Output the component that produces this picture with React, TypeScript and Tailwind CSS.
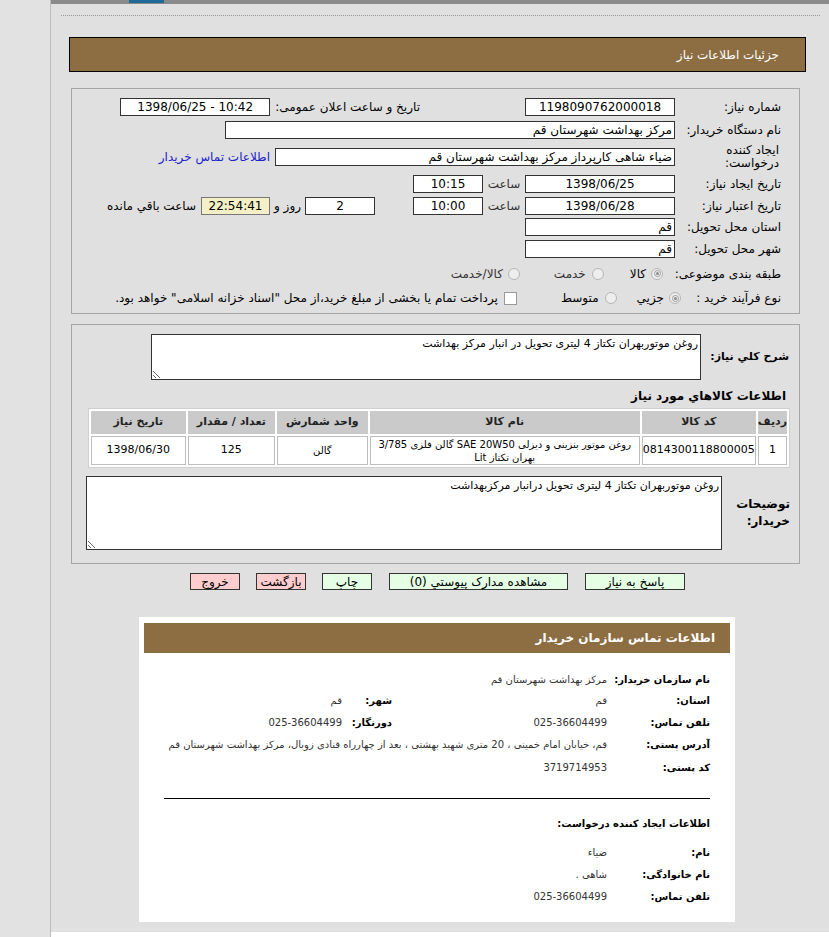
import React from "react";

function Field({
  className,
  children,
  align = "center",
}: {
  className: string;
  children?: React.ReactNode;
  align?: "center" | "right";
}) {
  return (
    <div
      className={`h-[18px] shrink-0 border border-[#333] bg-white flex items-center text-[12px] leading-none whitespace-nowrap ${
        align === "center" ? "justify-center" : "justify-start pr-[2px]"
      } ${className}`}
    >
      {children}
    </div>
  );
}

function Radio({ checked = false, className = "" }: { checked?: boolean; className?: string }) {
  return (
    <span
      className={`w-[12px] h-[12px] shrink-0 rounded-full border border-[#b5b5b5] bg-[#eeeeee] flex items-center justify-center ${className}`}
    >
      {checked && (
        <span className="w-[7px] h-[7px] rounded-full border border-[#9c9c9c] flex items-center justify-center">
          <span className="w-[3px] h-[3px] rounded-full bg-[#8c8c8c]" />
        </span>
      )}
    </span>
  );
}

function Button({ className, children }: { className: string; children: React.ReactNode }) {
  return (
    <div
      className={`h-[17px] border border-[#333] flex items-center justify-center text-[12px] leading-none whitespace-nowrap ${className}`}
    >
      {children}
    </div>
  );
}

function InfoRow({
  label,
  value,
  label2,
  value2,
  h = "h-[22px]",
}: {
  label: string;
  value: string;
  label2?: string;
  value2?: string;
  h?: string;
}) {
  return (
    <div className={`flex items-center whitespace-nowrap ${h}`}>
      <div className="w-[103px] shrink-0 text-[10px] font-bold">{label}</div>
      <div className="w-[215px] shrink-0 text-[10px] text-[#333]">{value}</div>
      {label2 && <div className="w-[50px] shrink-0 text-[10px] font-bold">{label2}</div>}
      {value2 && <div className="text-[10px] text-[#333]">{value2}</div>}
    </div>
  );
}

export default function App() {
  return (
    <div className="flex min-h-[937px] bg-[#e0e0e0] font-['DejaVu_Sans',sans-serif] text-black">
      <div className="w-[51px] shrink-0 bg-[#e2e2e2] border-r border-[#bdbdbd]" />
      <div className="flex-1 flex flex-col">
        <div className="h-[4px] bg-[#8a8a8a] flex">
          <div className="w-[78px]" />
          <div className="w-[35px] h-[3px] bg-[#1d6b96]" />
        </div>
        <div className="mt-[11px] ml-[10px] mr-[9px] border-t border-dotted border-[#9a9a9a]" />

        <div
          dir="rtl"
          className="mt-[21px] ml-[18px] mr-[23px] h-[35px] bg-[#8d6e43] border border-black flex items-center pr-[26px] text-white text-[12px]"
        >
          جزئیات اطلاعات نیاز
        </div>

        {/* panel 1 */}
        <div
          dir="rtl"
          className="mt-[16px] ml-[20px] mr-[29px] border border-[#a5a5a5] pt-[7px] pb-[4px] pr-[18px] text-[12px] whitespace-nowrap"
        >
          <div className="flex items-center h-[22px]">
            <div className="w-[106px] shrink-0">شماره نیاز:</div>
            <Field className="w-[150px]">1198090762000018</Field>
            <div className="mr-[105px]">تاریخ و ساعت اعلان عمومی:</div>
            <Field className="w-[150px] mr-[5px]">
              <span dir="ltr">1398/06/25 - 10:42</span>
            </Field>
          </div>
          <div className="flex items-center h-[23px]">
            <div className="w-[106px] shrink-0">نام دستگاه خریدار:</div>
            <Field className="w-[450px]" align="right">
              مرکز بهداشت شهرستان قم
            </Field>
          </div>
          <div className="flex items-center h-[31px]">
            <div className="w-[106px] shrink-0 leading-[13px] pr-[2px]">
              ایجاد کننده
              <br />
              درخواست:
            </div>
            <Field className="w-[400px]" align="right">
              ضیاء شاهی کارپرداز مرکز بهداشت شهرستان قم
            </Field>
            <div className="mr-[5px] text-[#2222cc]">اطلاعات تماس خریدار</div>
          </div>
          <div className="flex items-center h-[23px]">
            <div className="w-[106px] shrink-0">تاریخ ایجاد نیاز:</div>
            <Field className="w-[150px]">1398/06/25</Field>
            <div className="w-[42px] text-center text-[#333]">ساعت</div>
            <Field className="w-[70px]">10:15</Field>
          </div>
          <div className="flex items-center h-[21px]">
            <div className="w-[106px] shrink-0">تاریخ اعتبار نیاز:</div>
            <Field className="w-[150px]">1398/06/28</Field>
            <div className="w-[42px] text-center text-[#333]">ساعت</div>
            <Field className="w-[70px]">10:00</Field>
            <Field className="w-[70px] mr-[38px]">2</Field>
            <div className="mr-[4px]">روز و</div>
            <div className="mr-[4px] w-[69px] h-[18px] border border-[#777] bg-[#f3f0c8] flex items-center justify-center leading-none">
              22:54:41
            </div>
            <div className="mr-[5px]">ساعت باقي مانده</div>
          </div>
          <div className="flex items-center h-[22px]">
            <div className="w-[106px] shrink-0">استان محل تحویل:</div>
            <Field className="w-[150px]" align="right">
              قم
            </Field>
          </div>
          <div className="flex items-center h-[22px]">
            <div className="w-[106px] shrink-0">شهر محل تحویل:</div>
            <Field className="w-[150px]" align="right">
              قم
            </Field>
          </div>
          <div className="flex items-center h-[27px]">
            <div className="w-[106px] shrink-0">طبقه بندی موضوعی:</div>
            <Radio checked className="mr-[12px]" />
            <div className="mr-[5px]">کالا</div>
            <Radio className="mr-[26px]" />
            <div className="mr-[6px] text-[#333]">خدمت</div>
            <Radio className="mr-[34px]" />
            <div className="mr-[5px] text-[#333]">کالا/خدمت</div>
          </div>
          <div className="flex items-center h-[22px]">
            <div className="w-[100px] shrink-0">نوع فرآیند خرید :</div>
            <Radio checked />
            <div className="mr-[5px]">جزیي</div>
            <Radio className="mr-[20px]" />
            <div className="mr-[6px]">متوسط</div>
            <span className="mr-[44px] w-[13px] h-[13px] border border-[#9a9a9a] bg-white shrink-0" />
            <div className="mr-[6px]">
              پرداخت تمام یا بخشی از مبلغ خرید،از محل "اسناد خزانه اسلامی" خواهد بود.
            </div>
          </div>
        </div>

        {/* panel 2 */}
        <div dir="rtl" className="mt-[10px] ml-[20px] mr-[29px] border border-[#a5a5a5] pt-[9px] pb-[13px]">
          <div className="flex items-center pr-[10px]">
            <div className="w-[88px] shrink-0 text-[11px] font-bold whitespace-nowrap">شرح کلي نیاز:</div>
            <textarea
              readOnly
              dir="rtl"
              className="w-[550px] h-[46px] border border-[#333] bg-white text-[11px] px-[2px] py-[1px] resize outline-none font-['DejaVu_Sans',sans-serif]"
              defaultValue="روغن موتوربهران تکتاز 4 لیتری تحویل در انبار مرکز بهداشت"
            />
          </div>
          <div className="mt-[8px] pr-[13px] h-[16px] text-[12px] font-bold leading-[16px]">
            اطلاعات کالاهاي مورد نیاز
          </div>
          <div className="mt-[4px] mr-[9px] w-[702px]">
            <table className="w-[702px] border-separate border-spacing-[2px] border border-[#d0d0d0] bg-white text-[11px]">
              <thead>
                <tr className="h-[23px] bg-[#cacaca] text-[#222]">
                  <th className="w-[27px] font-bold">ردیف</th>
                  <th className="w-[101px] font-bold">کد کالا</th>
                  <th className="w-[272px] font-bold">نام کالا</th>
                  <th className="w-[96px] font-bold">واحد شمارش</th>
                  <th className="w-[94px] font-bold">تعداد / مقدار</th>
                  <th className="w-[98px] font-bold">تاریخ نیاز</th>
                </tr>
              </thead>
              <tbody>
                <tr className="h-[29px] text-center">
                  <td className="border border-[#bdbdbd]">1</td>
                  <td className="border border-[#bdbdbd]">0814300118800005</td>
                  <td className="border border-[#bdbdbd] leading-[13px] px-0 text-[10px] whitespace-nowrap">
                    روغن موتور بنزینی و دیزلی SAE 20W50 گالن فلزی 3/785
                    <br />
                    بهران تکتاز Lit
                  </td>
                  <td className="border border-[#bdbdbd] text-[10px]">گالن</td>
                  <td className="border border-[#bdbdbd]">125</td>
                  <td className="border border-[#bdbdbd]">1398/06/30</td>
                </tr>
              </tbody>
            </table>
          </div>
          <div className="mt-[8px] flex items-center">
            <div className="w-[77px] shrink-0 pr-[9px] text-[12px] font-bold leading-[17px]">
              توضیحات
              <br />
              خریدار:
            </div>
            <textarea
              readOnly
              dir="rtl"
              className="w-[636px] h-[74px] border border-[#333] bg-white text-[11px] px-[2px] py-[1px] resize outline-none font-['DejaVu_Sans',sans-serif]"
              defaultValue="روغن موتوربهران تکتاز 4 لیتری تحویل درانبار مرکزبهداشت"
            />
          </div>
        </div>

        {/* buttons */}
        <div dir="rtl" className="mt-[9px] flex pr-[144px]">
          <Button className="w-[100px] bg-[#e4ffe4]">پاسخ به نیاز</Button>
          <Button className="w-[179px] mr-[17px] bg-[#e4ffe4]">مشاهده مدارک پیوستي (0)</Button>
          <Button className="w-[50px] mr-[17px] bg-[#e4ffe4]">چاپ</Button>
          <Button className="w-[50px] mr-[16px] bg-[#ffcdcd]">بازگشت</Button>
          <Button className="w-[50px] mr-[16px] bg-[#ffcdcd]">خروج</Button>
        </div>

        {/* contact card */}
        <div dir="rtl" className="mt-[27px] ml-[88px] mr-[94px] bg-white px-[5px] pt-[6px] pb-[14px]">
          <div className="h-[30px] bg-[#8d6e43] flex items-center pr-[15px] text-white text-[12px] font-bold">
            اطلاعات تماس سازمان خریدار
          </div>
          <div className="mt-[15px] pr-[20px]">
            <InfoRow label="نام سازمان خریدار:" value="مرکز بهداشت شهرستان قم" />
            <InfoRow label="استان:" value="قم" label2="شهر:" value2="قم" h="h-[21px]" />
            <InfoRow label="تلفن تماس:" value="025-36604499" label2="دورنگار:" value2="025-36604499" />
            <div className="flex items-center h-[23px] whitespace-nowrap">
              <div className="w-[103px] shrink-0 text-[10px] font-bold">آدرس پستی:</div>
              <div className="text-[10px] text-[#333]">
                قم، خیابان امام خمینی ، 20 متری شهید بهشتی ، بعد از چهارراه قنادی زوبال، مرکز بهداشت شهرستان قم
              </div>
            </div>
            <InfoRow label="کد پستی:" value="3719714953" h="h-[23px]" />
          </div>
          <div className="mt-[19px] mx-[20px] border-t border-black" />
          <div className="mt-[13px] pr-[20px] h-[22px] flex items-center text-[10px] font-bold">
            اطلاعات ایجاد کننده درخواست:
          </div>
          <div className="mt-[7px] pr-[20px]">
            <InfoRow label="نام:" value="ضیاء" />
            <InfoRow label="نام خانوادگی:" value="شاهی ." />
            <InfoRow label="تلفن تماس:" value="025-36604499" h="h-[23px]" />
          </div>
        </div>
        <div className="mt-[10px] flex-1 bg-white" />
      </div>
    </div>
  );
}
